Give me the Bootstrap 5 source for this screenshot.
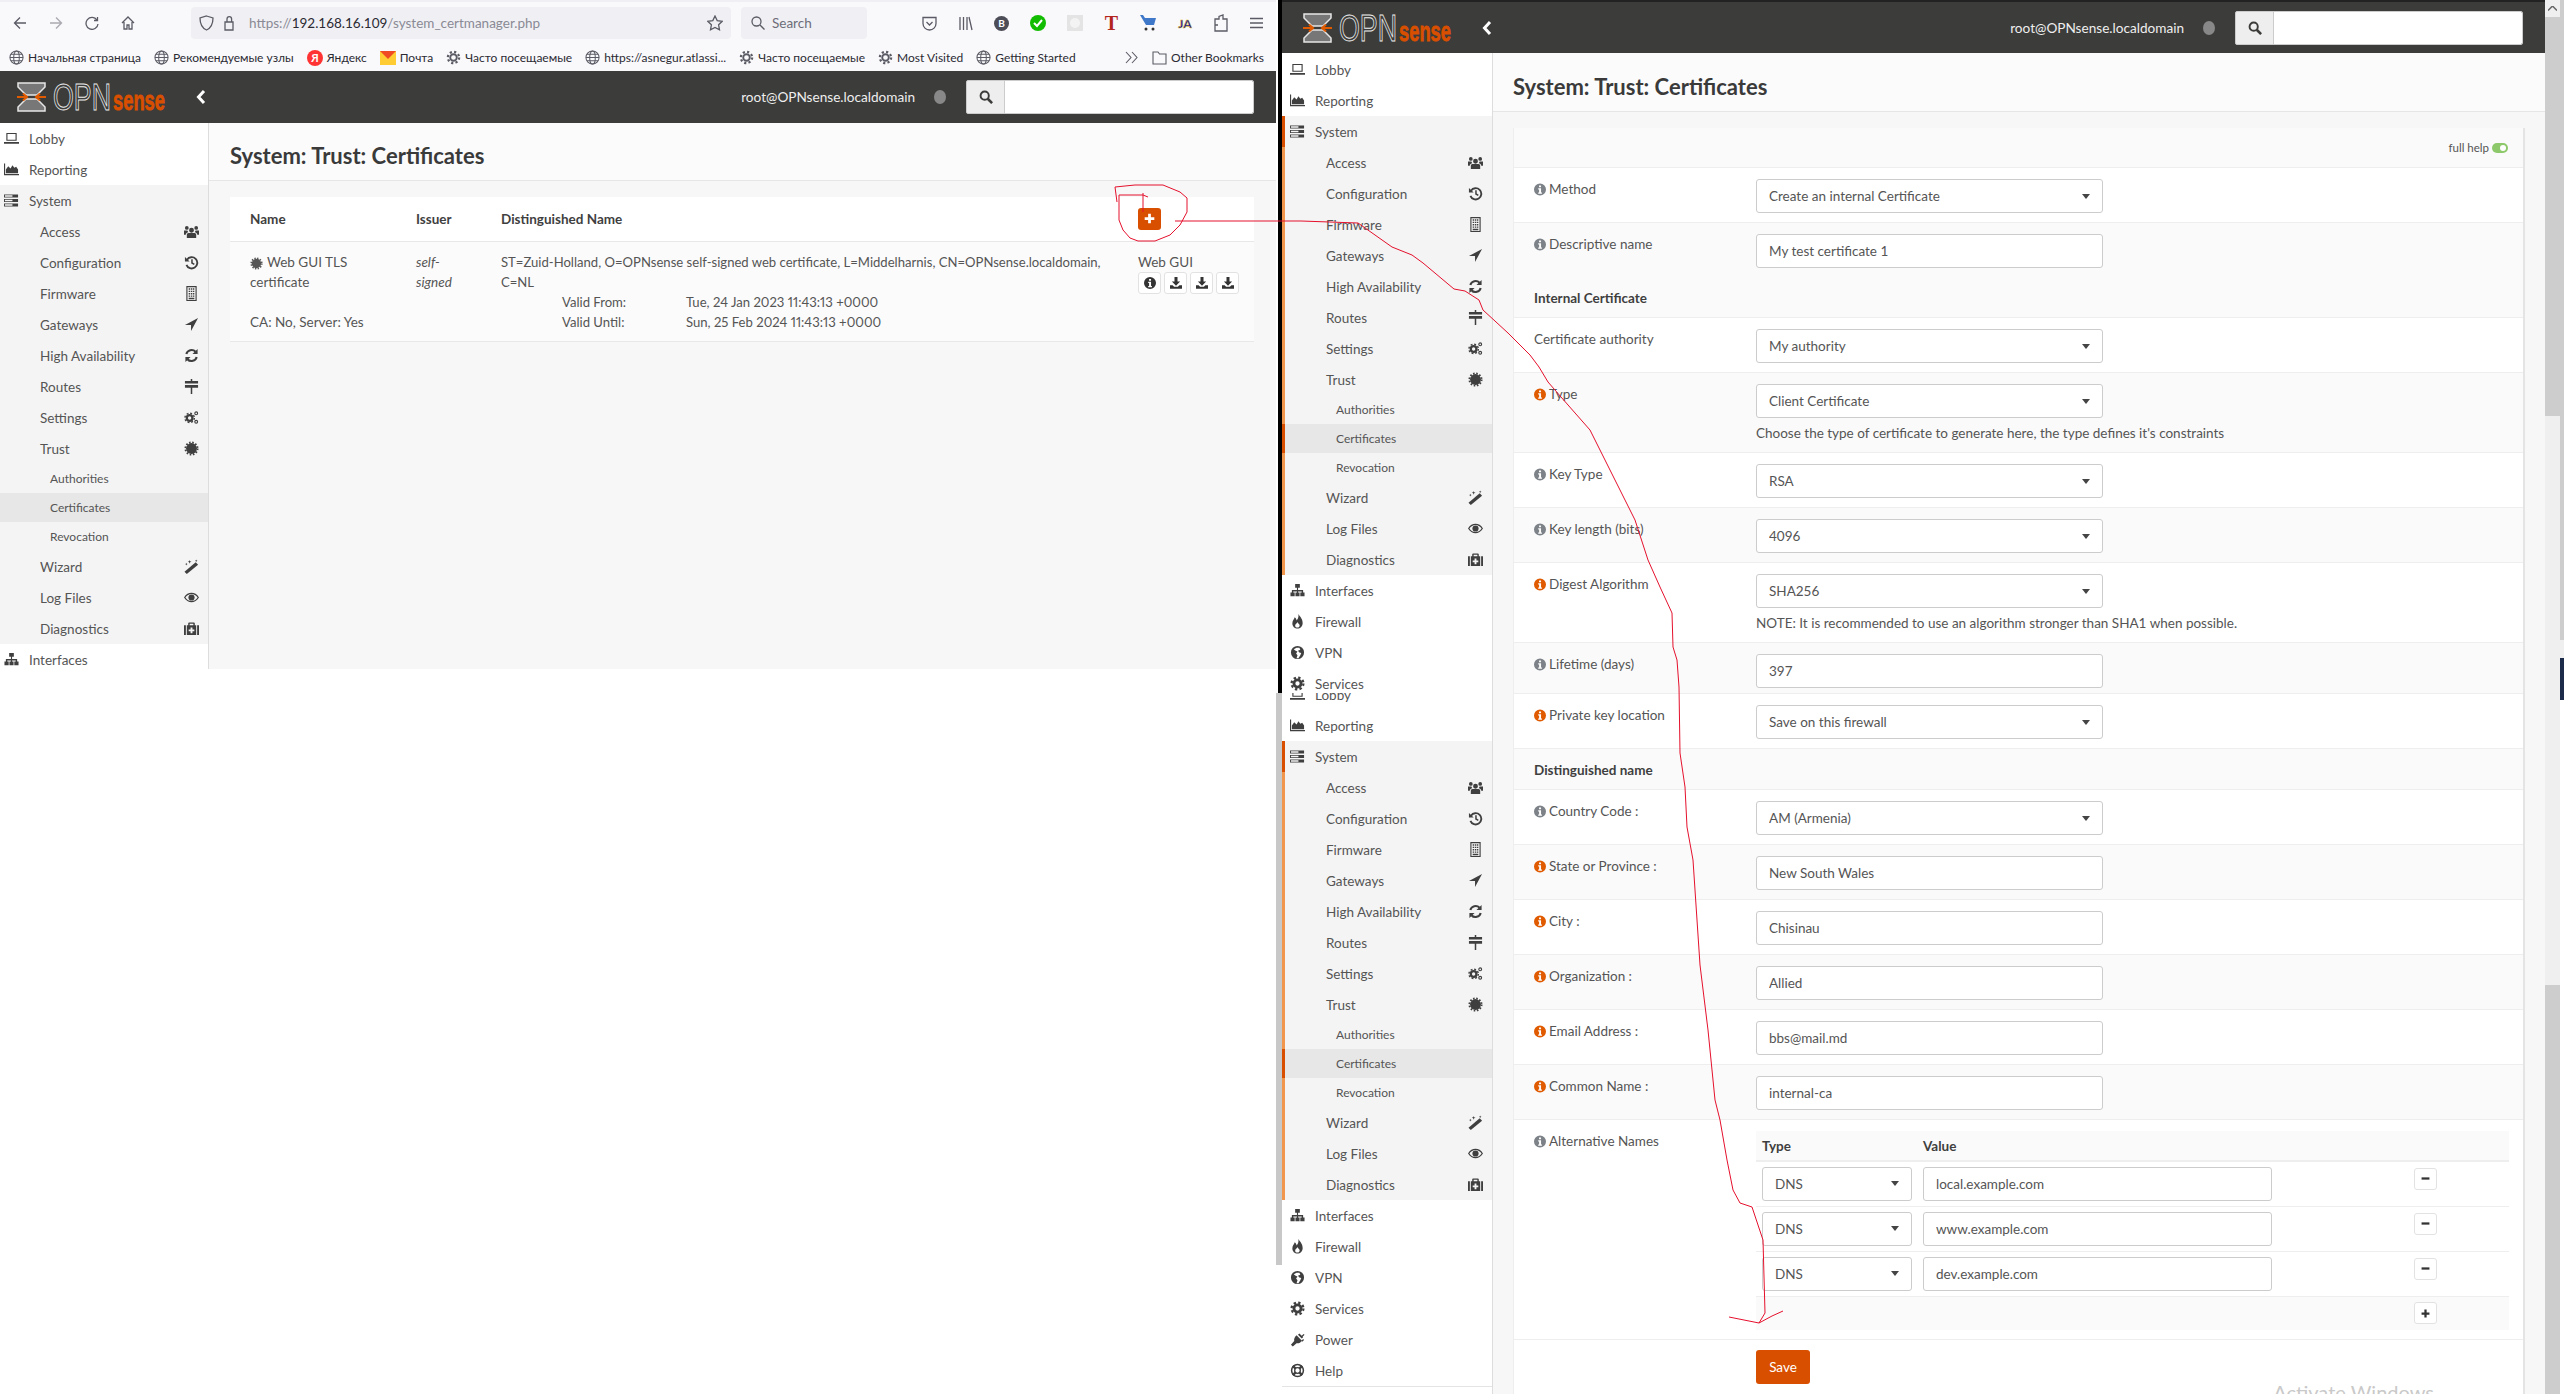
<!DOCTYPE html>
<html lang="en">
<head>
  <meta charset="UTF-8">
  <title>System: Trust: Certificates</title>
  <link href="https://cdn.jsdelivr.net/npm/bootstrap@5.3.3/dist/css/bootstrap.min.css" rel="stylesheet">
  <style>
    html, body { height: 1394px; overflow: hidden; background: #fff; }
    body { font-family: "Lato", "Noto Sans", sans-serif; font-size: 13.5px; line-height: 20px; color: #555; position: relative; }
    svg { fill: currentColor; flex-shrink: 0; }

    /* the two pasted screenshots */
    .win-left { position: absolute; left: 0; top: 0; width: 1276px; height: 669px; overflow: hidden; --off: 0px; --side: 209px; --pad: 21px; --padr: 22px; }
    .win-right { position: absolute; left: 1276px; top: 0; width: 1288px; height: 1394px; overflow: hidden; --off: 4px; --side: 211px; --pad: 20px; --padr: 20px; }
    .scribble { position: absolute; left: 0; top: 0; pointer-events: none; }
    .scribble path { fill: none; stroke: #e5102c; stroke-width: 1; }

    /* firefox chrome */
    .ff-bar { height: 44px; background: #f9f9fb; padding: 5px 0 0 13px; border-top: 2px solid #f0f0f4; }
    .ff-strip { height: 32px; }
    .ff-nav { gap: 22px; color: #5b5b66; }
    .ff-nav svg, .ff-tools svg, .ff-url svg, .ff-find svg { fill: none; stroke: #5b5b66; stroke-width: 1.3; }
    .ff-url { margin-left: 56px; width: 540px; height: 32px; background: #f0f0f4; border-radius: 4px; padding: 0 8px; color: #8a8a94; font-size: 13.5px; }
    .ff-url b { font-weight: 400; color: #2b2a33; }
    .ff-find { margin-left: 10px; width: 126px; height: 32px; background: #f0f0f4; border-radius: 4px; padding: 0 10px; gap: 7px; color: #6d6d78; }
    .ff-tools { margin-left: 55px; gap: 21px; }
    .ff-tools svg.solid { stroke: none; }
    .ff-marks { height: 27px; background: #f9f9fb; padding-left: 9px; gap: 13px; font-size: 12px; color: #2b2a33; white-space: nowrap; }
    .ff-marks svg { fill: none; stroke: #5b5b66; stroke-width: 1.1; }
    .ff-marks svg.solid { stroke: none; }
    .ff-end { margin-left: auto; gap: 14px; padding-right: 12px; }

    /* opnsense header */
    .opn-head { background: #3c3c3a; height: 52px; color: #eee; flex-shrink: 0; }
    .win-right .opn-head { height: 53px; border-top: 2px solid #222; }
    .opn-logo { margin-left: 17px; }
    .win-right .opn-logo { margin-left: 21px; }
    .opn-back { margin-left: 29px; color: #fff; }
    .opn-user { margin-left: auto; font-size: 13.6px; }
    .opn-dot { width: 12px; height: 14px; border-radius: 50%; background: #888; margin: 0 20px 0 19px; }
    .opn-search { width: 288px; margin-right: 22px; }
    .opn-search .input-group-text { background: #eee; border-color: #ccc; border-radius: 2px 0 0 2px; width: 39px; justify-content: center; padding: 0; color: #3c3c3a; }
    .opn-search .form-control { height: 34px; border-color: #ccc; border-radius: 0 2px 2px 0; }

    /* sidebar */
    .side-col { width: var(--side); flex-shrink: 0; background: #fff; border-right: 1px solid #ddd; overflow: hidden; }
    .clip-a { height: 640px; overflow: hidden; padding-top: 1px; }
    .clip-b { height: 694px; overflow: hidden; border-bottom: 1px solid #e4e4e4; }
    .clip-b > :first-child { margin-top: -14px; }
    .side-row { display: flex; align-items: center; height: 31px; padding: 0 9px 0 calc(var(--off) + 4px); color: #555; text-decoration: none; font-size: 13.5px; }
    .side-row > svg { width: 15px; height: 15px; margin-right: 10px; color: #3f3f3f; }
    .side-group { background: #f4f4f4; }
    .side-row.side-sub { padding-left: calc(var(--off) + 40px); justify-content: space-between; }
    .side-row.side-sub > svg { margin-right: 0; }
    .side-row.side-leaf { height: 29px; padding-left: calc(var(--off) + 50px); font-size: 12px; }
    .side-row.side-now { background: #e7e7e7; }
    .win-right .side-group { box-shadow: inset 3px 0 0 #f0974d; }
    .win-right .side-row.side-now, .win-right .side-row.side-open { box-shadow: inset 3px 0 0 #d94f00; }

    /* page body */
    .page-wrap { background: #f7f7f7; min-width: 0; }
    .page-stack { min-width: 0; }
    .page-title { height: 59px; background: #fbfbfb; border-bottom: 1px solid #e6e6e6; padding: 9px 0 0 var(--pad); font-size: 22px; font-weight: 700; color: #3a3a3a; flex-shrink: 0; }
    .win-left .page-title { height: 58px; }
    .page-panel { margin: 16px var(--padr) 0 var(--pad); background: #fff; }

    .cert-table { table-layout: fixed; margin: 0; color: #555; border-color: #e8e8e8; }
    .col-name { width: 166px; }
    .col-issuer { width: 85px; }
    .col-dn { width: 637px; }
    .cert-table th { height: 44px; padding: 0 0 0 20px; vertical-align: middle; font-size: 13.5px; font-weight: 700; color: #3f3f3f; }
    .cert-table td { padding: 10px 0 9px 20px; background: #fbfbfb; font-size: 13.5px; color: #555; }
    .cert-table td.dn-cell { font-size: 13.1px; white-space: nowrap; }
    .cert-dates { padding-left: 61px; font-variant-numeric: proportional-nums; }
    .cert-dates span { display: inline-block; width: 124px; }
    .cert-tools { gap: 3px; }
    .tool-btn { width: 23px; height: 22px; padding: 0; background: #fff; border: 1px solid #e2e2e2; border-radius: 3px; display: inline-flex; align-items: center; justify-content: center; color: #333; }
    .tool-btn svg { width: 12px; height: 12px; }
    .add-btn { width: 23px; height: 22px; padding: 0; background: #d94f00; border: 0; border-radius: 3px; display: inline-flex; align-items: center; justify-content: center; color: #fff; }
    .add-btn svg { width: 11px; height: 11px; }

    .form-panel { border-left: 1px solid #eee; border-right: 2px solid #e4e4e4; }
    .form-top { height: 40px; background: #fafafa; border-bottom: 1px solid #eee; padding-right: 15px; font-size: 11.5px; gap: 3px; }
    .help-pill { width: 16px; height: 10px; border-radius: 5px; background: #8dc96a; padding: 2px; display: flex; justify-content: flex-end; }
    .help-pill i { width: 6px; height: 6px; border-radius: 50%; background: #fff; }
    .cert-row { display: flex; padding: 11px 0 9px; border-bottom: 1px solid #eee; background: #fff; min-height: 55px; }
    .cert-row.tint { background: #fafafa; }
    .cert-row.bare { border-bottom: 0; }
    .cert-row.short { padding-bottom: 5px; min-height: 0; }
    .cert-row.save-row { padding-top: 10px; }
    .cert-head { display: flex; align-items: center; height: 40px; padding-left: 20px; font-weight: 700; color: #3f3f3f; background: #fafafa; border-bottom: 1px solid #eee; }
    .cert-head.dn-head { height: 41px; padding-top: 2px; }
    .cert-label { width: 242px; flex-shrink: 0; margin-top: -1px; padding-left: 20px; font-size: 13.5px; color: #555; line-height: 22px; }
    .cert-label svg { width: 12px; height: 13px; color: #7c8288; margin-right: 3px; vertical-align: -2px; }
    .cert-label.need svg { color: #e05a00; }
    .cert-field { width: 347px; }
    .cert-field .form-control, .cert-field .form-select, .alt-table .form-control, .alt-table .form-select { height: 34px; border: 1px solid #ccc; border-radius: 3px; padding: 6px 12px; font-size: 13.5px; color: #555; box-shadow: none; }
    .form-select { background-image: url("data:image/svg+xml,%3Csvg xmlns='http://www.w3.org/2000/svg' width='8' height='5'%3E%3Cpath d='M0 0h8L4 5z' fill='%23444'/%3E%3C/svg%3E"); background-position: right 12px center; background-size: 8px 5px; }
    .cert-hint { margin-top: 5px; width: 700px; font-size: 13.5px; color: #555; }
    .alt-table { table-layout: fixed; width: 753px; margin: 0; border-collapse: collapse; }
    .col-alt-type { width: 167px; }
    .col-alt-value { width: 491px; }
    .alt-table th { height: 30px; padding: 0 0 0 6px; background: #fafafa; font-weight: 700; color: #3f3f3f; border-bottom: 2px solid #eee; }
    .alt-table th + th { padding-left: 0; }
    .alt-table td { height: 45px; padding: 0 0 0 6px; border-bottom: 1px solid #eee; vertical-align: middle; }
    .alt-table td + td { padding-left: 0; }
    .alt-table tr.add-line td { height: 34px; background: #fafafa; border-bottom: 0; }
    .alt-table .tool-btn { margin-top: -10px; display: flex; }
    .alt-table tr.add-line .tool-btn { margin-top: 0; }
    .alt-table .tool-btn svg { width: 9px; height: 9px; }
    .alt-table .form-select { width: 150px; }
    .alt-table .form-control { width: 349px; }
    .save-btn { width: 54px; height: 34px; padding: 0; background: #d94f00; border: 0; border-radius: 3px; color: #fff; font-size: 13.5px; }
    .ghost-mark { position: absolute; right: 111px; bottom: -8px; font-size: 20px; color: #c9c9c9; white-space: nowrap; }

    /* window edges */
    .edge-col { width: 6px; flex-shrink: 0; }
    .edge-dark { height: 693px; background: #000; border-left: 2px solid #fff; }
    .edge-soft { height: 572px; background: #c8c8c8; }
    .bar-col { width: 19px; flex-shrink: 0; }
    .bar-thumb { height: 416px; background: #cdcdcd; }
    .bar-up { height: 17px; width: 15px; background: #efefef; color: #666; }
    .bar-up svg { width: 9px; height: 5px; }
    .bar-main { width: 15px; }
    .bar-track { height: 569px; background: #efefef; }
    .bar-low { height: 409px; background: #cdcdcd; }
    .bar-side { width: 4px; }
    .side-a { height: 224px; background: #cdcdcd; }
    .side-b { height: 18px; background: #efefef; }
    .side-c { height: 42px; background: #1c2b4a; }
  </style>
</head>
<body>

  <!-- icon set -->
  <svg width="0" height="0" class="position-absolute">
    <symbol id="i-laptop" viewBox="0 0 16 16"><path fill-rule="evenodd" d="M2.5 2h11v8.5h-11zM3.7 3.2v6.1h8.6V3.2zM0 11.8h16v1.7H0z"/></symbol>
    <symbol id="i-chart" viewBox="0 0 16 16"><path d="M0 1.5h1.2v11.3H16V14H0zM2 12V8l2.5-3.5L7 7l2-3.5L11 6l2-1 2 3v4z"/></symbol>
    <symbol id="i-tasks" viewBox="0 0 16 16"><path fill-rule="evenodd" d="M0 1.5h15v3.4H0zM1 2.5v1.4h8V2.5zM0 6.3h15v3.4H0zM1 7.3v1.4h8V7.3zM0 11.1h15v3.4H0zM1 12.1v1.4h8v-1.4z"/></symbol>
    <symbol id="i-users" viewBox="0 0 16 16"><path d="M8 4a2.6 2.6 0 1 1 0 5.2A2.6 2.6 0 0 1 8 4zM3 2.2a2 2 0 1 1 0 4 2 2 0 0 1 0-4zM13 2.2a2 2 0 1 1 0 4 2 2 0 0 1 0-4zM4.7 9.5h6.6c1 0 1.7 1 1.7 2V15H3v-3.5c0-1 .7-2 1.7-2zM0 7h3.6c.3 1 .7 1.5 1 1.9-1.8.3-2.6 1.4-2.7 2.6H0zM16 7h-3.6c-.3 1-.7 1.5-1 1.9 1.8.3 2.6 1.4 2.7 2.6H16z"/></symbol>
    <symbol id="i-history" viewBox="0 0 16 16"><path d="M3.2 5a6 6 0 1 1-.6 5.5" fill="none" stroke="currentColor" stroke-width="2"/><path d="M1 2v5h5z"/><path d="M8.5 4.5v4l2.5 1.500" fill="none" stroke="currentColor" stroke-width="1.6"/></symbol>
    <symbol id="i-building" viewBox="0 0 16 16"><path fill-rule="evenodd" d="M2.5 0h11v16h-11zM3.7 1.2v13.6h8.6V1.2z"/><path d="M5 2.5h1.5V4H5zM7.3 2.5h1.5V4H7.3zM9.5 2.5H11V4H9.5zM5 5h1.5v1.500H5zM7.3 5h1.500v1.500H7.300zM9.500 5H11v1.500H9.500zM5 7.500h1.500V9H5zM7.300 7.500h1.500V9H7.300zM9.500 7.500H11V9H9.500zM5 10h1.500v1.500H5zM7.300 10h1.500v1.500H7.300zM9.500 10H11v1.500H9.500zM5 12.500h6V14H5z"/></symbol>
    <symbol id="i-arrow" viewBox="0 0 16 16"><path d="M15 1 1 8.500h6.500V15z"/></symbol>
    <symbol id="i-sync" viewBox="0 0 16 16"><path d="M2.500 6.500A5.700 5.700 0 0 1 12.300 4M13.500 9.500A5.700 5.700 0 0 1 3.700 12" fill="none" stroke="currentColor" stroke-width="2.200"/><path d="M14.500 1v5.500H9zM1.500 15V9.500H7z"/></symbol>
    <symbol id="i-signs" viewBox="0 0 16 16"><path d="M7.200 0h1.600v2H15v2.800H1V2h6.200zM1 6.500h14v2.800H8.800V16H7.200V9.300H1z"/></symbol>
    <symbol id="i-cogs" viewBox="0 0 16 16"><g fill="none" stroke="currentColor"><circle cx="6" cy="8.500" r="3" stroke-width="2.400"/><circle cx="6" cy="8.500" r="5" stroke-width="1.500" stroke-dasharray="2 1.930"/><circle cx="13" cy="3.500" r="1.500" stroke-width="1.200"/><circle cx="13" cy="12.500" r="1.500" stroke-width="1.200"/></g></symbol>
    <symbol id="i-cert" viewBox="0 0 16 16"><circle cx="8" cy="8" r="5.800"/><circle cx="8" cy="8" r="6.500" fill="none" stroke="currentColor" stroke-width="2" stroke-dasharray="1.700 1.700"/></symbol>
    <symbol id="i-magic" viewBox="0 0 16 16"><path d="M12.500 3.500 15 6 3 16 .5 13.500z"/><path d="M6 1l.5 1.500L8 3l-1.500.5L6 5l-.5-1.500L4 3l1.500-.5zM13 .5l.4 1 1 .4-1 .4-.4 1-.4-1-1-.4 1-.4zM2.500 4l.4 1 1 .4-1 .4-.4 1-.4-1-1-.4 1-.4z"/></symbol>
    <symbol id="i-eye" viewBox="0 0 16 16"><path fill-rule="evenodd" d="M0 8c2-3.500 5-5 8-5s6 1.500 8 5c-2 3.500-5 5-8 5s-6-1.500-8-5zM1.500 8c1.500 2.500 4 3.800 6.500 3.800s5-1.300 6.500-3.800C13 5.500 10.500 4.200 8 4.200S3 5.500 1.500 8z"/><circle cx="8" cy="8" r="3.300"/></symbol>
    <symbol id="i-medkit" viewBox="0 0 16 16"><path fill-rule="evenodd" d="M0 4.500h2V15H0zM14 4.500h2V15h-2zM3 4.500h1.500V2.500c0-.6.4-1 1-1h5c.6 0 1 .4 1 1v2H13V15H3zM6 4.500h4V3H6zM7 7v2H5v2h2v2h2v-2h2V9H9V7z"/></symbol>
    <symbol id="i-tree" viewBox="0 0 16 16"><path d="M5.500 1h5v4H8.600v2.500H14V10h1.500v4h-4.500v-4h1.500V9H8.600v1H10.200v4H5.800v-4h1.600V9H3.500v1H5v4H.5v-4H2V7.500h5.400V5H5.500z"/></symbol>
    <symbol id="i-fire" viewBox="0 0 16 16"><path fill-rule="evenodd" d="M9 0c1 2.500 4.500 4.500 4.500 9.500 0 3.500-2.500 6-5.500 6s-5.500-2.500-5.500-5.500c0-3 2-4 2.500-6.500 1.500 1 2 2.500 2 3.500C8 6 9.500 3.500 9 0zM8 8.500c-.5 1.500-2.500 2-2.500 4 0 1.300 1 2 2.500 2 1.300 0 2.300-1 2.300-2.300 0-1.700-2-2.200-2.300-3.700z"/></symbol>
    <symbol id="i-globe" viewBox="0 0 16 16"><path fill-rule="evenodd" d="M8 1a7 7 0 1 1 0 14A7 7 0 0 1 8 1zM4 4.500 6 6l2 1-1.500 2L8 11l-1 3h2l2-3 1-2.500L10 8 8.500 6 11 5 10 3 7 3z"/></symbol>
    <symbol id="i-cog" viewBox="0 0 16 16"><circle cx="8" cy="8" r="3.800" fill="none" stroke="currentColor" stroke-width="3"/><circle cx="8" cy="8" r="6.300" fill="none" stroke="currentColor" stroke-width="2.400" stroke-dasharray="2.500 2.450"/></symbol>
    <symbol id="i-plug" viewBox="0 0 16 16"><path d="M7 3.500 12.500 9c-1 2.500-3.500 3.500-5.500 3l-4 3.500-2-2L4.500 9.500C4 7.500 5 5 7 3.500zM10 1.500l2.500 2.500 2-2 1 1-2 2 .5.500-1.500 1.500-4-4zM14 7.500l1 1-2 2-1-1z"/></symbol>
    <symbol id="i-ring" viewBox="0 0 16 16"><circle cx="8" cy="8" r="6.300" fill="none" stroke="currentColor" stroke-width="1.600"/><circle cx="8" cy="8" r="3" fill="none" stroke="currentColor" stroke-width="1.400"/><path d="M3 3l3 3M13 3l-3 3M3 13l3-3M13 13l-3-3" stroke="currentColor" stroke-width="2.600"/></symbol>
    <symbol id="i-info" viewBox="0 0 16 16"><path fill-rule="evenodd" d="M8 0a8 8 0 1 1 0 16A8 8 0 0 1 8 0zM6.700 2.600v2.500h2.700V2.600zM5.600 6.400v1.600h1.200v4H5.600v1.500h5V12H9.400V6.400z"/></symbol>
    <symbol id="i-save" viewBox="0 0 16 16"><path d="M6 0h4v6h3.500L8 11.500 2.500 6H6zM0 11h3.500L5.500 13h5l2-2H16v4.500H0z"/></symbol>
    <symbol id="i-plus" viewBox="0 0 16 16"><path d="M6 1h4v5h5v4h-5v5H6v-5H1V6h5z"/></symbol>
    <symbol id="i-minus" viewBox="0 0 16 16"><path d="M1 6h14v4H1z"/></symbol>
    <symbol id="i-find" viewBox="0 0 16 16"><circle cx="6.500" cy="6.500" r="4.700" fill="none" stroke="currentColor" stroke-width="2.200"/><path d="m10 10 5 5" stroke="currentColor" stroke-width="3"/></symbol>
    <symbol id="i-back" viewBox="0 0 10 16"><path d="M8 2 2.500 8 8 14" fill="none" stroke="currentColor" stroke-width="3"/></symbol>
    <symbol id="i-web" viewBox="0 0 16 16"><circle cx="8" cy="8" r="7"/><ellipse cx="8" cy="8" rx="3" ry="7"/><path d="M1 8h14M2 4.500h12M2 11.500h12"/></symbol>
    <symbol id="i-gear" viewBox="0 0 16 16"><circle cx="8" cy="8" r="3.500" fill="none" stroke="#5b5b66" stroke-width="2"/><circle cx="8" cy="8" r="6" fill="none" stroke="#5b5b66" stroke-width="2.400" stroke-dasharray="2.300 2.400"/></symbol>
  </svg>

  <!-- left screenshot -->
  <div class="win-left d-flex flex-column">
    <div class="ff-bar d-flex flex-shrink-0">
      <div class="ff-nav ff-strip d-flex align-items-center align-self-start">
        <svg width="14" height="14" viewBox="0 0 14 14"><path d="M13 7H1.500M7 1.500 1.500 7 7 12.500"/></svg>
        <svg width="14" height="14" viewBox="0 0 14 14" opacity=".5"><path d="M1 7h11.500M7 1.500 12.500 7 7 12.500"/></svg>
        <svg width="14" height="14" viewBox="0 0 14 14"><path d="M12 4A6 6 0 1 0 13 8M12.500 1v3.500H9"/></svg>
        <svg width="14" height="14" viewBox="0 0 14 14"><path d="M1 7 7 1l6 6M3 6v7h3V9h2v4h3V6"/></svg>
      </div>
      <div class="ff-url d-flex align-items-center gap-2">
        <svg width="15" height="16" viewBox="0 0 15 16"><path d="M7.500 1 14 3c0 6-2 10-6.500 12C3 13 1 9 1 3z"/></svg>
        <svg width="15" height="16" viewBox="0 0 15 16"><path d="M3 7h8v8H3zM5 7V4a2.300 2.300 0 0 1 4.600 0v3"/></svg>
        <span class="ms-1">https://<b>192.168.16.109</b>/system_certmanager.php</span>
        <svg class="ms-auto" width="16" height="16" viewBox="0 0 16 16"><path d="m8 1 2.200 4.600 5 .7-3.600 3.500.9 5L8 12.400 3.500 14.800l.9-5L.8 6.300l5-.7z"/></svg>
      </div>
      <div class="ff-find d-flex align-items-center">
        <svg width="14" height="14" viewBox="0 0 14 14"><circle cx="5.500" cy="5.500" r="4.500"/><path d="m9 9 4.500 4.500"/></svg>
        <span>Search</span>
      </div>
      <div class="ff-tools ff-strip d-flex align-items-center align-self-start">
        <svg width="15" height="15" viewBox="0 0 15 15"><path d="M1 1.500h13v6a6.500 6.500 0 0 1-13 0zM4.500 6 7.500 9l3-3"/></svg>
        <svg width="15" height="15" viewBox="0 0 15 15"><path d="M2 1v13M5.500 1v13M9 1v13M11 1l3 13"/></svg>
        <svg class="solid" width="15" height="15" viewBox="0 0 15 15"><circle cx="7.500" cy="7.500" r="7.500" fill="#4d4d57"/><text x="7.500" y="11" text-anchor="middle" font-size="10" font-weight="700" fill="#fff">B</text></svg>
        <svg class="solid" width="16" height="16" viewBox="0 0 16 16"><circle cx="8" cy="8" r="8" fill="#12bc00"/><path d="m4 8 3 3 5-6" fill="none" stroke="#fff" stroke-width="2"/></svg>
        <svg class="solid" width="16" height="16" viewBox="0 0 16 16"><rect width="16" height="16" fill="#e4e4e4"/><circle cx="8" cy="8" r="5" fill="#f3f3f3"/></svg>
        <svg class="solid" width="15" height="24" viewBox="0 0 15 24"><text x="7.500" y="19" text-anchor="middle" font-family="Liberation Serif" font-size="20" font-weight="700" fill="#b3261e">T</text></svg>
        <svg class="solid" width="16" height="18" viewBox="0 0 16 18"><path d="M0 1h3l2 3h11l-2 7H6z" fill="#3f78c9"/><circle cx="6" cy="15" r="1.500" fill="#333"/><circle cx="13" cy="15" r="1.500" fill="#333"/></svg>
        <svg class="solid" width="16" height="16" viewBox="0 0 16 16"><text x="8" y="13" text-anchor="middle" font-size="12" font-weight="900" fill="#1a1a9c" stroke="#e5c100" stroke-width=".4">JA</text></svg>
        <svg width="15" height="18" viewBox="0 0 15 18"><path d="M1 5h4V2.500L9 1v4h4v12H1zM1 11h3"/></svg>
        <svg width="13" height="12" viewBox="0 0 13 12"><path d="M0 1.500h13M0 6h13M0 10.500h13"/></svg>
      </div>
    </div>
    <div class="ff-marks d-flex align-items-center flex-shrink-0">
      <span class="d-flex align-items-center gap-1"><svg width="15" height="15"><use href="#i-web"/></svg>Начальная страница</span>
      <span class="d-flex align-items-center gap-1"><svg width="15" height="15"><use href="#i-web"/></svg>Рекомендуемые узлы</span>
      <span class="d-flex align-items-center gap-1"><svg class="solid" width="16" height="16" viewBox="0 0 16 16"><circle cx="8" cy="8" r="8" fill="#f33"/><text x="8" y="12" text-anchor="middle" font-size="11" font-weight="700" fill="#fff">Я</text></svg>Яндекс</span>
      <span class="d-flex align-items-center gap-1"><svg class="solid" width="16" height="16" viewBox="0 0 16 16"><rect y="1" width="16" height="14" fill="#ffcc33"/><path d="M0 1h16L8 9z" fill="#f04a24"/></svg>Почта</span>
      <span class="d-flex align-items-center gap-1"><svg class="solid" width="15" height="15"><use href="#i-gear"/></svg>Часто посещаемые</span>
      <span class="d-flex align-items-center gap-1"><svg width="15" height="15"><use href="#i-web"/></svg>https://asnegur.atlassi...</span>
      <span class="d-flex align-items-center gap-1"><svg class="solid" width="15" height="15"><use href="#i-gear"/></svg>Часто посещаемые</span>
      <span class="d-flex align-items-center gap-1"><svg class="solid" width="15" height="15"><use href="#i-gear"/></svg>Most Visited</span>
      <span class="d-flex align-items-center gap-1"><svg width="15" height="15"><use href="#i-web"/></svg>Getting Started</span>
      <div class="ff-end d-flex align-items-center">
        <svg width="13" height="13" viewBox="0 0 13 13"><path d="m1 1 5 5.500L1 12M7 1l5 5.500L7 12"/></svg>
        <span class="d-flex align-items-center gap-1"><svg width="15" height="15" viewBox="0 0 15 15"><path d="M1 2h5l1.500 2H14v10H1z"/></svg>Other Bookmarks</span>
      </div>
    </div>

    <div class="opn-head d-flex align-items-center">
      <svg class="opn-logo" width="150" height="44" viewBox="0 -7 150 44">
        <path d="M1 1h27v4l-8 8H9L1 5zM1 29h27v-4l-8-8H9l-8 8z" fill="#777" stroke="#e6e6e6" stroke-width="1.500"/>
        <path d="M0 15h10M6 11.500l4 3.500-4 3.500M29 15H19M23 11.500 19 15l4 3.500" fill="none" stroke="#e05a00" stroke-width="2"/>
        <text x="36" y="28" font-family="Liberation Sans" font-size="36" textLength="58" lengthAdjust="spacingAndGlyphs" fill="none" stroke="#eee" stroke-width=".9">OPN</text>
        <text x="96" y="28" font-family="Liberation Sans" font-weight="700" font-size="28" textLength="52" lengthAdjust="spacingAndGlyphs" fill="#d94f00" stroke="#d94f00" stroke-width=".8">sense</text>
      </svg>
      <svg class="opn-back" width="10" height="16"><use href="#i-back"/></svg>
      <span class="opn-user">root@OPNsense.localdomain</span>
      <span class="opn-dot"></span>
      <div class="opn-search input-group">
        <span class="input-group-text"><svg width="14" height="14"><use href="#i-find"/></svg></span>
        <input type="text" class="form-control">
      </div>
    </div>

    <div class="d-flex flex-grow-1 overflow-hidden">
      <div class="side-col">
        <a class="side-row" href="#"><svg><use href="#i-laptop"/></svg>Lobby</a>
        <a class="side-row" href="#"><svg><use href="#i-chart"/></svg>Reporting</a>
        <div class="side-group">
          <a class="side-row" href="#"><svg><use href="#i-tasks"/></svg>System</a>
          <a class="side-row side-sub" href="#">Access<svg><use href="#i-users"/></svg></a>
          <a class="side-row side-sub" href="#">Configuration<svg><use href="#i-history"/></svg></a>
          <a class="side-row side-sub" href="#">Firmware<svg><use href="#i-building"/></svg></a>
          <a class="side-row side-sub" href="#">Gateways<svg><use href="#i-arrow"/></svg></a>
          <a class="side-row side-sub" href="#">High Availability<svg><use href="#i-sync"/></svg></a>
          <a class="side-row side-sub" href="#">Routes<svg><use href="#i-signs"/></svg></a>
          <a class="side-row side-sub" href="#">Settings<svg><use href="#i-cogs"/></svg></a>
          <a class="side-row side-sub" href="#">Trust<svg><use href="#i-cert"/></svg></a>
          <a class="side-row side-leaf" href="#">Authorities</a>
          <a class="side-row side-leaf side-now" href="#">Certificates</a>
          <a class="side-row side-leaf" href="#">Revocation</a>
          <a class="side-row side-sub" href="#">Wizard<svg><use href="#i-magic"/></svg></a>
          <a class="side-row side-sub" href="#">Log Files<svg><use href="#i-eye"/></svg></a>
          <a class="side-row side-sub" href="#">Diagnostics<svg><use href="#i-medkit"/></svg></a>
        </div>
        <a class="side-row" href="#"><svg><use href="#i-tree"/></svg>Interfaces</a>
      </div>
      <div class="page-wrap flex-grow-1 d-flex flex-column">
        <div class="page-title d-flex align-items-center">System: Trust: Certificates</div>
        <div class="page-panel">
          <table class="table cert-table">
            <colgroup><col class="col-name"><col class="col-issuer"><col class="col-dn"><col></colgroup>
            <thead>
              <tr><th>Name</th><th>Issuer</th><th>Distinguished Name</th><th><button class="add-btn"><svg><use href="#i-plus"/></svg></button></th></tr>
            </thead>
            <tbody>
              <tr>
                <td><svg width="13" height="13" class="me-1"><use href="#i-cert"/></svg>Web GUI TLS<br>certificate<br><br>CA: No, Server: Yes</td>
                <td class="fst-italic">self-<br>signed</td>
                <td class="dn-cell">ST=Zuid-Holland, O=OPNsense self-signed web certificate, L=Middelharnis, CN=OPNsense.localdomain,<br>C=NL
                  <div class="cert-dates"><span>Valid From:</span>Tue, 24 Jan 2023 11:43:13 +0000</div>
                  <div class="cert-dates"><span>Valid Until:</span>Sun, 25 Feb 2024 11:43:13 +0000</div>
                </td>
                <td>Web GUI
                  <div class="cert-tools d-flex">
                    <button class="tool-btn"><svg><use href="#i-info"/></svg></button>
                    <button class="tool-btn"><svg><use href="#i-save"/></svg></button>
                    <button class="tool-btn"><svg><use href="#i-save"/></svg></button>
                    <button class="tool-btn"><svg><use href="#i-save"/></svg></button>
                  </div>
                </td>
              </tr>
            </tbody>
          </table>
        </div>
      </div>
    </div>
  </div>

  <!-- right screenshot -->
  <div class="win-right d-flex">
    <div class="edge-col">
      <div class="edge-dark"></div>
      <div class="edge-soft"></div>
    </div>
    <div class="page-stack flex-grow-1 d-flex flex-column">
      <div class="opn-head d-flex align-items-center">
        <svg class="opn-logo" width="150" height="44" viewBox="0 -7 150 44">
          <path d="M1 1h27v4l-8 8H9L1 5zM1 29h27v-4l-8-8H9l-8 8z" fill="#777" stroke="#e6e6e6" stroke-width="1.500"/>
          <path d="M0 15h10M6 11.500l4 3.500-4 3.500M29 15H19M23 11.500 19 15l4 3.500" fill="none" stroke="#e05a00" stroke-width="2"/>
          <text x="36" y="28" font-family="Liberation Sans" font-size="36" textLength="58" lengthAdjust="spacingAndGlyphs" fill="none" stroke="#eee" stroke-width=".9">OPN</text>
          <text x="96" y="28" font-family="Liberation Sans" font-weight="700" font-size="28" textLength="52" lengthAdjust="spacingAndGlyphs" fill="#d94f00" stroke="#d94f00" stroke-width=".8">sense</text>
        </svg>
        <svg class="opn-back" width="10" height="16"><use href="#i-back"/></svg>
        <span class="opn-user">root@OPNsense.localdomain</span>
        <span class="opn-dot"></span>
        <div class="opn-search input-group">
          <span class="input-group-text"><svg width="14" height="14"><use href="#i-find"/></svg></span>
          <input type="text" class="form-control">
        </div>
      </div>

      <div class="d-flex flex-grow-1 overflow-hidden">
        <div class="side-col">
          <div class="clip-a">
            <a class="side-row" href="#"><svg><use href="#i-laptop"/></svg>Lobby</a>
            <a class="side-row" href="#"><svg><use href="#i-chart"/></svg>Reporting</a>
            <div class="side-group">
              <a class="side-row side-open" href="#"><svg><use href="#i-tasks"/></svg>System</a>
              <a class="side-row side-sub" href="#">Access<svg><use href="#i-users"/></svg></a>
              <a class="side-row side-sub" href="#">Configuration<svg><use href="#i-history"/></svg></a>
              <a class="side-row side-sub" href="#">Firmware<svg><use href="#i-building"/></svg></a>
              <a class="side-row side-sub" href="#">Gateways<svg><use href="#i-arrow"/></svg></a>
              <a class="side-row side-sub" href="#">High Availability<svg><use href="#i-sync"/></svg></a>
              <a class="side-row side-sub" href="#">Routes<svg><use href="#i-signs"/></svg></a>
              <a class="side-row side-sub" href="#">Settings<svg><use href="#i-cogs"/></svg></a>
              <a class="side-row side-sub" href="#">Trust<svg><use href="#i-cert"/></svg></a>
              <a class="side-row side-leaf" href="#">Authorities</a>
              <a class="side-row side-leaf side-now" href="#">Certificates</a>
              <a class="side-row side-leaf" href="#">Revocation</a>
              <a class="side-row side-sub" href="#">Wizard<svg><use href="#i-magic"/></svg></a>
              <a class="side-row side-sub" href="#">Log Files<svg><use href="#i-eye"/></svg></a>
              <a class="side-row side-sub" href="#">Diagnostics<svg><use href="#i-medkit"/></svg></a>
            </div>
            <a class="side-row" href="#"><svg><use href="#i-tree"/></svg>Interfaces</a>
            <a class="side-row" href="#"><svg><use href="#i-fire"/></svg>Firewall</a>
            <a class="side-row" href="#"><svg><use href="#i-globe"/></svg>VPN</a>
            <a class="side-row" href="#"><svg><use href="#i-cog"/></svg>Services</a>
          </div>
          <div class="clip-b">
            <a class="side-row" href="#"><svg><use href="#i-laptop"/></svg>Lobby</a>
            <a class="side-row" href="#"><svg><use href="#i-chart"/></svg>Reporting</a>
            <div class="side-group">
              <a class="side-row side-open" href="#"><svg><use href="#i-tasks"/></svg>System</a>
              <a class="side-row side-sub" href="#">Access<svg><use href="#i-users"/></svg></a>
              <a class="side-row side-sub" href="#">Configuration<svg><use href="#i-history"/></svg></a>
              <a class="side-row side-sub" href="#">Firmware<svg><use href="#i-building"/></svg></a>
              <a class="side-row side-sub" href="#">Gateways<svg><use href="#i-arrow"/></svg></a>
              <a class="side-row side-sub" href="#">High Availability<svg><use href="#i-sync"/></svg></a>
              <a class="side-row side-sub" href="#">Routes<svg><use href="#i-signs"/></svg></a>
              <a class="side-row side-sub" href="#">Settings<svg><use href="#i-cogs"/></svg></a>
              <a class="side-row side-sub" href="#">Trust<svg><use href="#i-cert"/></svg></a>
              <a class="side-row side-leaf" href="#">Authorities</a>
              <a class="side-row side-leaf side-now" href="#">Certificates</a>
              <a class="side-row side-leaf" href="#">Revocation</a>
              <a class="side-row side-sub" href="#">Wizard<svg><use href="#i-magic"/></svg></a>
              <a class="side-row side-sub" href="#">Log Files<svg><use href="#i-eye"/></svg></a>
              <a class="side-row side-sub" href="#">Diagnostics<svg><use href="#i-medkit"/></svg></a>
            </div>
            <a class="side-row" href="#"><svg><use href="#i-tree"/></svg>Interfaces</a>
            <a class="side-row" href="#"><svg><use href="#i-fire"/></svg>Firewall</a>
            <a class="side-row" href="#"><svg><use href="#i-globe"/></svg>VPN</a>
            <a class="side-row" href="#"><svg><use href="#i-cog"/></svg>Services</a>
            <a class="side-row" href="#"><svg><use href="#i-plug"/></svg>Power</a>
            <a class="side-row" href="#"><svg><use href="#i-ring"/></svg>Help</a>
          </div>
        </div>

        <div class="page-wrap flex-grow-1 d-flex flex-column position-relative overflow-hidden">
          <div class="page-title d-flex align-items-center">System: Trust: Certificates</div>
          <div class="page-panel form-panel flex-grow-1">
            <div class="form-top d-flex align-items-center justify-content-end">full help<span class="help-pill"><i></i></span></div>

            <div class="cert-row">
              <div class="cert-label"><svg><use href="#i-info"/></svg>Method</div>
              <div class="cert-field"><select class="form-select"><option>Create an internal Certificate</option></select></div>
            </div>
            <div class="cert-row tint bare">
              <div class="cert-label"><svg><use href="#i-info"/></svg>Descriptive name</div>
              <div class="cert-field"><input class="form-control" value="My test certificate 1"></div>
            </div>
            <div class="cert-head">Internal Certificate</div>
            <div class="cert-row">
              <div class="cert-label">Certificate authority</div>
              <div class="cert-field"><select class="form-select"><option>My authority</option></select></div>
            </div>
            <div class="cert-row tint">
              <div class="cert-label need"><svg><use href="#i-info"/></svg>Type</div>
              <div class="cert-field"><select class="form-select"><option>Client Certificate</option></select>
                <div class="cert-hint">Choose the type of certificate to generate here, the type defines it's constraints</div></div>
            </div>
            <div class="cert-row">
              <div class="cert-label"><svg><use href="#i-info"/></svg>Key Type</div>
              <div class="cert-field"><select class="form-select"><option>RSA</option></select></div>
            </div>
            <div class="cert-row tint">
              <div class="cert-label"><svg><use href="#i-info"/></svg>Key length (bits)</div>
              <div class="cert-field"><select class="form-select"><option>4096</option></select></div>
            </div>
            <div class="cert-row">
              <div class="cert-label need"><svg><use href="#i-info"/></svg>Digest Algorithm</div>
              <div class="cert-field"><select class="form-select"><option>SHA256</option></select>
                <div class="cert-hint">NOTE: It is recommended to use an algorithm stronger than SHA1 when possible.</div></div>
            </div>
            <div class="cert-row tint short">
              <div class="cert-label"><svg><use href="#i-info"/></svg>Lifetime (days)</div>
              <div class="cert-field"><input class="form-control" value="397"></div>
            </div>
            <div class="cert-row">
              <div class="cert-label need"><svg><use href="#i-info"/></svg>Private key location</div>
              <div class="cert-field"><select class="form-select"><option>Save on this firewall</option></select></div>
            </div>
            <div class="cert-head dn-head">Distinguished name</div>
            <div class="cert-row">
              <div class="cert-label"><svg><use href="#i-info"/></svg>Country Code :</div>
              <div class="cert-field"><select class="form-select"><option>AM (Armenia)</option></select></div>
            </div>
            <div class="cert-row tint">
              <div class="cert-label need"><svg><use href="#i-info"/></svg>State or Province :</div>
              <div class="cert-field"><input class="form-control" value="New South Wales"></div>
            </div>
            <div class="cert-row">
              <div class="cert-label need"><svg><use href="#i-info"/></svg>City :</div>
              <div class="cert-field"><input class="form-control" value="Chisinau"></div>
            </div>
            <div class="cert-row tint">
              <div class="cert-label need"><svg><use href="#i-info"/></svg>Organization :</div>
              <div class="cert-field"><input class="form-control" value="Allied"></div>
            </div>
            <div class="cert-row">
              <div class="cert-label need"><svg><use href="#i-info"/></svg>Email Address :</div>
              <div class="cert-field"><input class="form-control" value="bbs@mail.md"></div>
            </div>
            <div class="cert-row tint">
              <div class="cert-label need"><svg><use href="#i-info"/></svg>Common Name :</div>
              <div class="cert-field"><input class="form-control" value="internal-ca"></div>
            </div>
            <div class="cert-row">
              <div class="cert-label"><svg><use href="#i-info"/></svg>Alternative Names</div>
              <div>
                <table class="alt-table">
                  <colgroup><col class="col-alt-type"><col class="col-alt-value"><col></colgroup>
                  <thead><tr><th>Type</th><th>Value</th><th></th></tr></thead>
                  <tbody>
                    <tr>
                      <td><select class="form-select"><option>DNS</option></select></td>
                      <td><input class="form-control" value="local.example.com"></td>
                      <td><button class="tool-btn"><svg><use href="#i-minus"/></svg></button></td>
                    </tr>
                    <tr>
                      <td><select class="form-select"><option>DNS</option></select></td>
                      <td><input class="form-control" value="www.example.com"></td>
                      <td><button class="tool-btn"><svg><use href="#i-minus"/></svg></button></td>
                    </tr>
                    <tr>
                      <td><select class="form-select"><option>DNS</option></select></td>
                      <td><input class="form-control" value="dev.example.com"></td>
                      <td><button class="tool-btn"><svg><use href="#i-minus"/></svg></button></td>
                    </tr>
                    <tr class="add-line"><td></td><td></td><td><button class="tool-btn"><svg><use href="#i-plus"/></svg></button></td></tr>
                  </tbody>
                </table>
              </div>
            </div>
            <div class="cert-row bare save-row">
              <div class="cert-label"></div>
              <div><button class="save-btn">Save</button></div>
            </div>
          </div>
          <span class="ghost-mark">Activate Windows</span>
        </div>
      </div>
    </div>
    <div class="bar-col">
      <div class="bar-thumb">
        <div class="bar-up d-flex align-items-center justify-content-center"><svg viewBox="0 0 9 5"><path d="M0 4.500 4.500 0 9 4.500" fill="none" stroke="currentColor" stroke-width="1.500"/></svg></div>
      </div>
      <div class="d-flex">
        <div class="bar-main">
          <div class="bar-track"></div>
          <div class="bar-low"></div>
        </div>
        <div class="bar-side">
          <div class="side-a"></div>
          <div class="side-b"></div>
          <div class="side-c"></div>
        </div>
      </div>
    </div>
  </div>

  <!-- red hand-drawn marks -->
  <svg class="scribble" width="2564" height="1394" viewBox="0 0 2564 1394">
    <path d="M1117 202 1115 187 1135 185 1163 185 1180 192 1187 198 1187 212 1180 225 1170 235 1155 241 1138 241 1130 238 1123 230 1119 220 1119 195 1143 195 1148 197M1143 193V212"/>
    <path d="M1175 221 1301 221 1358 223 1392 247 1412 255 1423 263 1454 289 1465 291 1479 300 1483 310 1508 333 1530 355 1539 367 1548 382 1561 397 1590 430 1615 480 1635 520 1648 560 1660 587 1672 613 1673 647 1677 660 1679 687 1680 753 1685 787 1687 827 1693 860 1700 965 1708 1030 1715 1100 1720 1120 1727 1160 1733 1190 1740 1203 1752 1207 1763 1240 1765 1313 1759 1323 1729 1317M1759 1323 1772 1316 1783 1311"/>
  </svg>

</body>
</html>
